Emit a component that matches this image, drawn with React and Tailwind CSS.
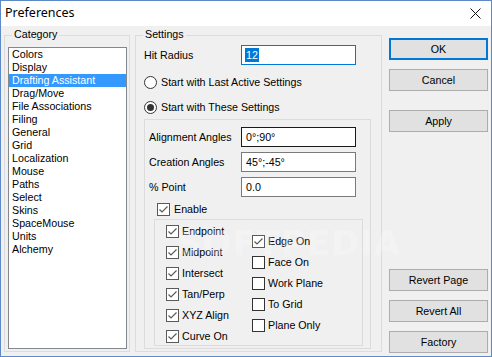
import React from 'react';

const categories = [
  'Colors', 'Display', 'Drafting Assistant', 'Drag/Move', 'File Associations', 'Filing',
  'General', 'Grid', 'Localization', 'Mouse', 'Paths', 'Select', 'Skins', 'SpaceMouse',
  'Units', 'Alchemy',
];

const leftChecks = [
  ['Endpoint', true], ['Midpoint', true], ['Intersect', true],
  ['Tan/Perp', true], ['XYZ Align', true], ['Curve On', true],
];
const rightChecks = [
  ['Edge On', true], ['Face On', false], ['Work Plane', false],
  ['To Grid', false], ['Plane Only', false],
];

const CheckBox = ({ checked }) => (
  <svg width="13" height="13" viewBox="0 0 13 13" className="shrink-0">
    <rect x="0.5" y="0.5" width="12" height="12" fill="#fff" stroke={checked ? '#5a5a5a' : '#333'} />
    {checked && <path d="M2.5 6.5 L5 9 L10.5 3.5" fill="none" stroke="#5a5a5a" strokeWidth="1.2" />}
  </svg>
);

const Radio = ({ on }) => (
  <svg width="13" height="13" viewBox="0 0 13 13" className="shrink-0">
    <circle cx="6.5" cy="6.5" r="6" fill="#fff" stroke="#333" />
    {on && <circle cx="6.5" cy="6.5" r="3.5" fill="#333" />}
  </svg>
);

const CheckRow = ({ label, checked }) => (
  <div className="h-[21px] flex items-center gap-[3px]">
    <CheckBox checked={checked} />
    <span>{label}</span>
  </div>
);

const Field = ({ label, value, dark }) => (
  <div className="flex items-center pl-[4px]">
    <span className="w-[92px]">{label}</span>
    <div className={`w-[115px] h-[20px] bg-white border flex items-center pl-[4px] ${dark ? 'border-[#1a1a1a]' : 'border-[#7a7a7a]'}`}>
      {value}
    </div>
  </div>
);

const Btn = ({ children, primary, className = '' }) => (
  <div
    className={`w-[99px] h-[22px] bg-[#e1e1e1] flex items-center justify-center ${primary ? 'border-2 border-[#0078d7]' : 'border border-[#adadad]'} ${className}`}
  >
    {children}
  </div>
);

export default function App() {
  return (
    <div className="w-[492px] h-[357px] border border-[#5e89c9] flex flex-col text-[10.7px] leading-none text-black font-['Liberation_Sans',Arial,sans-serif] overflow-hidden">
      {/* title bar */}
      <div className="h-[25px] bg-white flex items-center justify-between pl-[4px] pr-[10px]">
        <span className="text-[12.5px] font-['Noto_Sans',sans-serif]">Preferences</span>
        <svg width="11" height="11" viewBox="0 0 11 11">
          <path d="M0.5 0.5 L10.5 10.5 M10.5 0.5 L0.5 10.5" stroke="#111" strokeWidth="1" />
        </svg>
      </div>

      <div className="flex-1 bg-[#f0f0f0] flex pl-[3px] pt-[9px]">
        {/* Category */}
        <div className="relative w-[126px] h-[317px] border border-[#dcdcdc] pl-[3px] pt-[11px]">
          <span className="absolute -top-[7px] left-[7px] px-[2px] bg-[#f0f0f0]">Category</span>
          <div className="w-[119px] h-[302px] bg-white border border-[#828790]">
            {categories.map((c) => (
              <div
                key={c}
                className={`h-[13px] flex items-center pl-[3px] ${c === 'Drafting Assistant' ? 'bg-[#3399ff] text-white' : ''}`}
              >
                {c}
              </div>
            ))}
          </div>
        </div>

        {/* Settings */}
        <div className="relative ml-[5px] w-[247px] h-[317px] border border-[#dcdcdc] pl-[8px] flex flex-col">
          <span className="absolute -top-[7px] left-[7px] px-[2px] bg-[#f0f0f0]">Settings</span>
          <div className="mt-[9px] flex items-center">
            <span className="w-[97px]">Hit Radius</span>
            <div className="w-[115px] h-[20px] bg-white border border-[#0078d7] flex items-center pl-[3px]">
              <span className="bg-[#0078d7] text-white px-[1px] py-[2px]">12</span>
            </div>
          </div>
          <div className="mt-[9px] h-[16px] flex items-center gap-[4px]">
            <Radio />
            <span>Start with Last Active Settings</span>
          </div>
          <div className="mt-[9px] h-[16px] flex items-center gap-[4px]">
            <Radio on />
            <span>Start with These Settings</span>
          </div>

          <div className="mt-[4px] w-[227px] h-[230px] border border-[#dcdcdc] flex flex-col">
            <div className="mt-[7px]">
              <Field label="Alignment Angles" value="0°;90°" dark />
            </div>
            <div className="mt-[5px]">
              <Field label="Creation Angles" value="45°;-45°" />
            </div>
            <div className="mt-[5px]">
              <Field label="% Point" value="0.0" />
            </div>
            <div className="mt-[4px] h-[16px] ml-[12px] flex items-center gap-[4px]">
              <CheckBox checked />
              <span>Enable</span>
            </div>
            <div className="relative mt-[2px] ml-[9px] w-[209px] h-[127px] border border-[#dcdcdc] flex pl-[11px]">
              <div className="w-[86px] pt-[1px]">
                {leftChecks.map(([l, c]) => <CheckRow key={l} label={l} checked={c} />)}
              </div>
              <div className="pt-[11px]">
                {rightChecks.map(([l, c]) => <CheckRow key={l} label={l} checked={c} />)}
              </div>
              <span className="absolute left-[22px] top-[6px] text-[34px] font-bold tracking-[1px] text-white/25 pointer-events-none font-['DejaVu_Sans',sans-serif]">
                SOFTPEDIA
              </span>
            </div>
          </div>
        </div>

        {/* Buttons */}
        <div className="ml-[7px] flex flex-col pt-[3px]">
          <Btn primary>OK</Btn>
          <Btn className="mt-[9px]">Cancel</Btn>
          <Btn className="mt-[19px]">Apply</Btn>
          <Btn className="mt-[137px]">Revert Page</Btn>
          <Btn className="mt-[9px]">Revert All</Btn>
          <Btn className="mt-[9px]">Factory</Btn>
        </div>
      </div>
    </div>
  );
}
